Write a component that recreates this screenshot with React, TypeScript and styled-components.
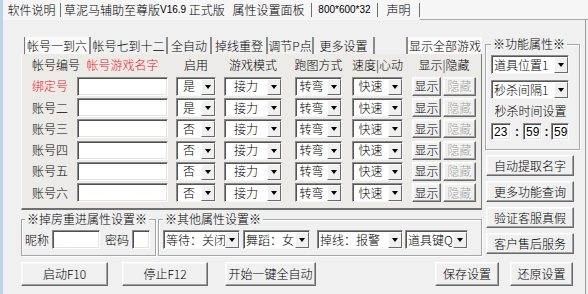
import React from "react";
import styled, { createGlobalStyle, css } from "styled-components";

type Align = "left" | "center";

const GlobalStyle = createGlobalStyle`
  * { box-sizing: border-box; }
  html, body { margin: 0; padding: 0; background: #f0f0f0; }
  body {
    font-family: "Noto Sans CJK SC", "Liberation Sans", sans-serif;
    font-size: 12px;
    font-weight: 300;
    line-height: 1;
    color: #000;
  }
`;

const Window = styled.div`
  width: 588px;
  height: 294px;
  display: flex;
  flex-direction: column;
  background: #f0f0f0;
  border-left: 3px solid #bed3ea;
  overflow: hidden;
`;

/* top menu strip */
const TopBar = styled.div`
  display: flex;
  height: 20px;
  flex-shrink: 0;
  background: #f6f6f6;
`;

const TopItem = styled.div<{ $w: number; $align?: Align }>`
  width: ${(p) => p.$w}px;
  flex-shrink: 0;
  display: flex;
  align-items: center;
  justify-content: ${(p) => (p.$align === "left" ? "flex-start" : "center")};
  padding-left: ${(p) => (p.$align === "left" ? 3 : 0)}px;
  white-space: nowrap;
`;

const TopSep = styled.span`
  align-self: center;
  width: 1px;
  height: 14px;
  background: #6e6e6e;
  flex-shrink: 0;
`;

const TopFill = styled.div`
  flex: 1;
  border-bottom: 1px solid #a9a9a9;
`;

const Latin = styled.span`
  font-family: "Liberation Sans", Arial, sans-serif;
  font-size: 10px;
  font-weight: 400;
`;

/* main body */
const Body = styled.div`
  flex: 1;
  display: grid;
  grid-template-columns: 461px 95px;
  grid-template-rows: 173px 44px 24px;
  grid-template-areas:
    "main side"
    "groups side"
    "footer footer";
  column-gap: 3px;
  row-gap: 2px;
  padding: 17px 5px 0 18px;
  margin-right: 2px;
  border-right: 1px solid #9c9c9c;
`;

const Main = styled.div`
  grid-area: main;
  display: flex;
  flex-direction: column;
`;

const TabRow = styled.div`
  display: flex;
  height: 17px;
  padding-left: 3px;
  flex-shrink: 0;
`;

const Tab = styled.div<{ $w: number; $active?: boolean; $end?: boolean }>`
  width: ${(p) => p.$w}px;
  flex-shrink: 0;
  display: flex;
  align-items: center;
  justify-content: center;
  white-space: nowrap;
  border-right: 2px solid #8a8a8a;
  ${(p) =>
    p.$active &&
    css`
      border-left: 1px solid #777;
      background: #f9f9f9;
    `}
  ${(p) =>
    p.$end &&
    css`
      margin-left: auto;
      border-left: 2px solid #8a8a8a;
      border-right: none;
      background: #fbfbfb;
    `}
`;

const TablePanel = styled.div`
  flex: 1;
  display: flex;
  flex-direction: column;
  gap: 1.3px;
  padding: 1px 0 0 9px;
  background: #ecebe8;
  border-left: 1px solid #fafafa;
  border-right: 1px solid #7a7a7a;
  border-bottom: 2px solid #707070;
`;

const Row = styled.div`
  display: flex;
  align-items: center;
  height: 20px;
  flex-shrink: 0;
`;

const Cell = styled.div<{ $w: number; $ml?: number; $align?: Align; $red?: boolean }>`
  width: ${(p) => p.$w}px;
  margin-left: ${(p) => p.$ml ?? 0}px;
  flex-shrink: 0;
  display: flex;
  align-items: center;
  justify-content: ${(p) => (p.$align === "left" ? "flex-start" : "center")};
  padding-left: ${(p) => (p.$align === "left" ? 1 : 0)}px;
  white-space: nowrap;
  color: ${(p) => (p.$red ? "#f0141e" : "#000")};
`;

/* win32-ish controls */
const ComboBox = styled.div<{ $w: number; $ml?: number }>`
  width: ${(p) => p.$w}px;
  margin-left: ${(p) => p.$ml ?? 0}px;
  height: 19px;
  flex-shrink: 0;
  display: flex;
  background: #fff;
  border: 1px solid;
  border-color: #8a8a8a #f7f7f7 #f7f7f7 #8a8a8a;
  box-shadow: inset 1px 1px 0 #555;
`;

const ComboText = styled.span<{ $align?: Align }>`
  flex: 1;
  display: flex;
  align-items: center;
  justify-content: ${(p) => (p.$align === "left" ? "flex-start" : "center")};
  padding-left: ${(p) => (p.$align === "left" ? 2 : 0)}px;
  white-space: nowrap;
  overflow: hidden;
`;

const ComboButton = styled.span`
  width: 14px;
  flex-shrink: 0;
  margin: 1px 0 0 0;
  display: flex;
  align-items: center;
  justify-content: center;
  background: #f0f0f0;
  border: 1px solid;
  border-color: #fff #6a6a6a #6a6a6a #fff;
  &::after {
    content: "";
    border-left: 3.5px solid transparent;
    border-right: 3.5px solid transparent;
    border-top: 4px solid #000;
  }
`;

const TextBox = styled.div<{ $w: number; $ml?: number }>`
  width: ${(p) => p.$w}px;
  margin-left: ${(p) => p.$ml ?? 0}px;
  height: 19px;
  flex-shrink: 0;
  display: flex;
  align-items: center;
  padding-left: 2px;
  background: #fff;
  border: 1px solid;
  border-color: #8a8a8a #fff #fff #8a8a8a;
  box-shadow: inset 1px 1px 0 #505050, inset -1px -1px 0 #e3e3e3;
  font-family: "Liberation Sans", Arial, sans-serif;
  font-weight: 400;
  font-size: 12px;
`;

const PushButton = styled.button<{ $w: number; $h: number; $ml?: number; $push?: boolean }>`
  width: ${(p) => p.$w}px;
  height: ${(p) => p.$h}px;
  margin: 0 0 0 ${(p) => (p.$push ? "auto" : `${p.$ml ?? 0}px`)};
  flex-shrink: 0;
  padding: 0;
  font: inherit;
  color: #000;
  white-space: nowrap;
  background: #f0f0f0;
  border: 1px solid;
  border-color: #fff #696969 #696969 #fff;
  box-shadow: inset -1px -1px 0 #a0a0a0, inset 1px 1px 0 #f8f8f8;
  &:disabled {
    color: #a3a3a3;
    text-shadow: 1px 1px 0 #fff;
  }
`;

/* group boxes */
const Group = styled.fieldset<{ $w: number; $h: number; $pl: number }>`
  width: ${(p) => p.$w}px;
  height: ${(p) => p.$h}px;
  flex-shrink: 0;
  margin: 0;
  min-width: 0;
  padding: 4px 0 0 ${(p) => p.$pl}px;
  border: 1px solid #a6a6a6;
  box-shadow: inset 1px 1px 0 #fff, 1px 1px 0 #fff;
`;

const GroupTitle = styled.legend`
  padding: 0 2px;
  line-height: 14px;
  background: #f0f0f0;
  white-space: nowrap;
`;

const GroupRow = styled.div`
  display: flex;
  align-items: center;
`;

const Label = styled.span<{ $ml?: number }>`
  margin: 0 3px 0 ${(p) => p.$ml ?? 0}px;
  white-space: nowrap;
`;

const Groups = styled.div`
  grid-area: groups;
  display: flex;
  gap: 2px;
`;

const Side = styled.div`
  grid-area: side;
  display: flex;
  flex-direction: column;
  gap: 5px;
`;

const SideStack = styled.div`
  display: flex;
  flex-direction: column;
  gap: 6px;
`;

const Caption = styled.div`
  height: 12px;
  width: 79px;
  display: flex;
  align-items: center;
  justify-content: center;
`;

const TimeRow = styled.div`
  display: flex;
  align-items: center;
  & > ${TextBox} {
    height: 17px;
  }
`;

const Colon = styled.span<{ $w: number }>`
  width: ${(p) => p.$w}px;
  text-align: center;
  font-weight: bold;
  font-family: "Liberation Sans", Arial, sans-serif;
`;

const Footer = styled.div`
  grid-area: footer;
  display: flex;
  margin-top: 4px;
  padding-right: 7px;
`;

type ComboProps = { w: number; ml?: number; align?: Align; children: React.ReactNode };

const Combo: React.FC<ComboProps> = ({ w, ml, align, children }) => (
  <ComboBox $w={w} $ml={ml}>
    <ComboText $align={align}>{children}</ComboText>
    <ComboButton />
  </ComboBox>
);

const cols = {
  label: { w: 46, ml: 0 },
  name: { w: 91, ml: 0 },
  on: { w: 40, ml: 8 },
  mode: { w: 58, ml: 8 },
  route: { w: 47, ml: 13 },
  speed: { w: 51, ml: 10 },
  show: { w: 29, ml: 9 },
  hide: { w: 33, ml: 2 },
};

const accounts = [
  { label: "绑定号", red: true, on: "是" },
  { label: "账号二", on: "是" },
  { label: "账号三", on: "否" },
  { label: "账号四", on: "否" },
  { label: "账号五", on: "否" },
  { label: "账号六", on: "否" },
];

const tabs = [
  { text: "帐号一到六", w: 67, active: true },
  { text: "帐号七到十二", w: 77 },
  { text: "全自动", w: 44 },
  { text: "掉线重登", w: 56 },
  { text: "调节P点", w: 46 },
  { text: "更多设置", w: 61 },
];

const sideButtons = ["自动提取名字", "更多功能查询", "验证客服真假", "客户售后服务"];

const App: React.FC = () => {
  return (
    <>
      <GlobalStyle />
      <Window>
        <TopBar>
          <TopItem $w={57}>软件说明</TopItem>
          <TopSep />
          <TopItem $w={165} $align="left">
            草泥马辅助至尊版<Latin>V16.9</Latin>&nbsp;正式版
          </TopItem>
          <TopItem $w={85}>属性设置面板</TopItem>
          <TopSep />
          <TopItem $w={65}>
            <Latin>800*600*32</Latin>
          </TopItem>
          <TopSep />
          <TopItem $w={41}>声明</TopItem>
          <TopSep />
          <TopFill />
        </TopBar>

        <Body>
          <Main>
            <TabRow>
              {tabs.map((t) => (
                <Tab key={t.text} $w={t.w} $active={t.active}>
                  {t.text}
                </Tab>
              ))}
              <Tab $w={76} $end>
                显示全部游戏
              </Tab>
            </TabRow>

            <TablePanel>
              <Row>
                <Cell $w={cols.label.w} $align="left">帐号编号</Cell>
                <Cell $w={cols.name.w} $red>帐号游戏名字</Cell>
                <Cell $w={cols.on.w} $ml={cols.on.ml}>启用</Cell>
                <Cell $w={cols.mode.w} $ml={cols.mode.ml}>游戏模式</Cell>
                <Cell $w={cols.route.w} $ml={cols.route.ml}>跑图方式</Cell>
                <Cell $w={cols.speed.w} $ml={cols.speed.ml}>速度|心动</Cell>
                <Cell $w={cols.show.w + cols.hide.ml + cols.hide.w} $ml={cols.show.ml}>
                  显示|隐藏
                </Cell>
              </Row>
              {accounts.map((a) => (
                <Row key={a.label}>
                  <Cell $w={cols.label.w} $align="left" $red={a.red}>
                    {a.label}
                  </Cell>
                  <TextBox $w={cols.name.w} />
                  <Combo w={cols.on.w} ml={cols.on.ml}>{a.on}</Combo>
                  <Combo w={cols.mode.w} ml={cols.mode.ml}>接力</Combo>
                  <Combo w={cols.route.w} ml={cols.route.ml}>转弯</Combo>
                  <Combo w={cols.speed.w} ml={cols.speed.ml}>快速</Combo>
                  <PushButton $w={cols.show.w} $h={19} $ml={cols.show.ml}>显示</PushButton>
                  <PushButton $w={cols.hide.w} $h={19} $ml={cols.hide.ml} disabled>
                    隐藏
                  </PushButton>
                </Row>
              ))}
            </TablePanel>
          </Main>

          <Side>
            <Group $w={95} $h={113} $pl={5}>
              <GroupTitle>※功能属性※</GroupTitle>
              <SideStack>
                <Combo w={78} align="left">道具位置1</Combo>
                <Combo w={78} align="left">秒杀间隔1</Combo>
                <Caption>秒杀时间设置</Caption>
                <TimeRow>
                  <TextBox $w={20}>23</TextBox>
                  <Colon $w={12}>:</Colon>
                  <TextBox $w={19}>59</TextBox>
                  <Colon $w={9}>:</Colon>
                  <TextBox $w={18}>59</TextBox>
                </TimeRow>
              </SideStack>
            </Group>
            {sideButtons.map((b) => (
              <PushButton key={b} $w={88} $h={21} $ml={1}>
                {b}
              </PushButton>
            ))}
          </Side>

          <Groups>
            <Group $w={135} $h={44} $pl={3}>
              <GroupTitle>※掉房重进属性设置※</GroupTitle>
              <GroupRow>
                <Label>昵称</Label>
                <TextBox $w={48} />
                <Label $ml={5}>密码</Label>
                <TextBox $w={18} />
              </GroupRow>
            </Group>
            <Group $w={324} $h={44} $pl={4}>
              <GroupTitle>※其他属性设置※</GroupTitle>
              <GroupRow>
                <Combo w={77} align="left">等待：关闭</Combo>
                <Combo w={67} ml={3} align="left">舞蹈：女</Combo>
                <Combo w={86} ml={7} align="left">掉线：报警</Combo>
                <Combo w={63} ml={2} align="left">道具键Q</Combo>
              </GroupRow>
            </Group>
          </Groups>

          <Footer>
            <PushButton $w={87} $h={24}>启动F10</PushButton>
            <PushButton $w={86} $h={24} $ml={14}>停止F12</PushButton>
            <PushButton $w={91} $h={24} $ml={17}>开始一键全自动</PushButton>
            <PushButton $w={64} $h={24} $push>保存设置</PushButton>
            <PushButton $w={63} $h={24} $ml={11}>还原设置</PushButton>
          </Footer>
        </Body>
      </Window>
    </>
  );
};

export default App;
